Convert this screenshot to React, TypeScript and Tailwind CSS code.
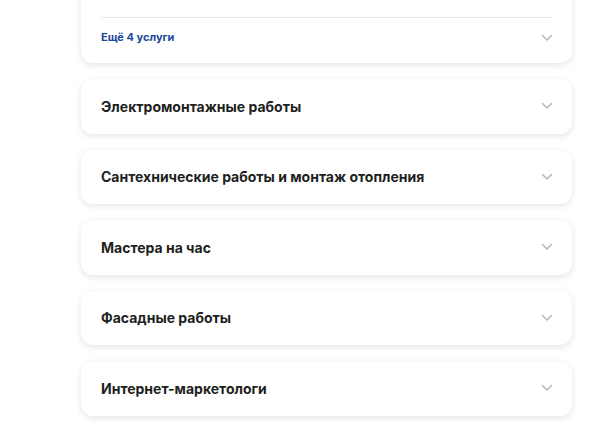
import React from "react";

const Chevron = () => (
  <svg width="12" height="8" viewBox="0 0 12 8" fill="none" className="shrink-0">
    <path d="M1.5 1.5L6 6L10.5 1.5" stroke="#b4b9c1" strokeWidth="1.6" strokeLinecap="round" strokeLinejoin="round" />
  </svg>
);

const items = [
  "Электромонтажные работы",
  "Сантехнические работы и монтаж отопления",
  "Мастера на час",
  "Фасадные работы",
  "Интернет-маркетологи",
];

export default function App() {
  return (
    <div className="w-[605px] h-[430px] overflow-hidden bg-white" style={{ fontFamily: "Inter, 'Noto Sans', sans-serif" }}>
      <div className="ml-[81px] w-[491px] flex flex-col gap-4">
        <div className="-mt-[40px] bg-white rounded-xl shadow-[0_2px_7px_rgba(0,0,0,0.11)] pl-5 pr-[19px] pb-[6px]">
          <div className="h-[57px]" />
          <div className="h-px bg-[#e6e9ed]" />
          <div className="h-[39px] flex items-center justify-between">
            <span className="text-[11px] font-bold text-[#21479b]">Ещё 4 услуги</span>
            <Chevron />
          </div>
        </div>
        {items.map((t) => (
          <div key={t} className="h-[54.5px] bg-white rounded-xl shadow-[0_2px_7px_rgba(0,0,0,0.11)] pl-5 pr-[19px] flex items-center justify-between">
            <span className="text-[14px] font-bold text-[#1e1f21]">{t}</span>
            <Chevron />
          </div>
        ))}
      </div>
    </div>
  );
}
